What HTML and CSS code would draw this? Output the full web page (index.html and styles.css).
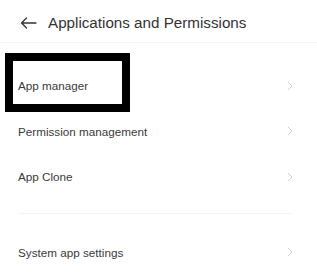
FILE: index.html
```html
<!DOCTYPE html>
<html lang="en">
<head>
    <meta charset="UTF-8">
    <title>Applications and Permissions</title>
    <link rel="stylesheet" href="styles.css">
</head>
<body>
    <div class="header">
        <svg class="back" width="17" height="12" viewBox="0 0 17 12">
            <path d="M16 6H1.5M6.5 1L1.5 6l5 5" fill="none" stroke="#333" stroke-width="1.3" stroke-linecap="round" stroke-linejoin="round"/>
        </svg>
        <span class="title">Applications and Permissions</span>
    </div>
    <div class="list">
        <div class="row">
            <span>App manager</span>
            <svg class="chev" width="6" height="10" viewBox="0 0 6 10"><path d="M1 1l4 4-4 4" fill="none" stroke="#cfcfcf" stroke-width="1"/></svg>
        </div>
        <div class="row">
            <span>Permission management</span>
            <svg class="chev" width="6" height="10" viewBox="0 0 6 10"><path d="M1 1l4 4-4 4" fill="none" stroke="#cfcfcf" stroke-width="1"/></svg>
        </div>
        <div class="row">
            <span>App Clone</span>
            <svg class="chev" width="6" height="10" viewBox="0 0 6 10"><path d="M1 1l4 4-4 4" fill="none" stroke="#cfcfcf" stroke-width="1"/></svg>
        </div>
        <div class="divider"></div>
        <div class="row">
            <span>System app settings</span>
            <svg class="chev" width="6" height="10" viewBox="0 0 6 10"><path d="M1 1l4 4-4 4" fill="none" stroke="#cfcfcf" stroke-width="1"/></svg>
        </div>
    </div>
    <div class="highlight"></div>
</body>
</html>
```
FILE: styles.css
```css
body {
    margin: 0;
    background: #fff;
    font-family: 'Liberation Sans', Arial, sans-serif;
    color: #333;
    position: relative;
    width: 317px;
    height: 279px;
    overflow: hidden;
}
.header {
    height: 43px;
    display: flex;
    align-items: center;
    padding-left: 20px;
    border-bottom: 1px solid #f4f4f4;
    box-sizing: border-box;
}
.back {
    margin-right: 11px;
    margin-top: 3px;
}
.title {
    font-size: 15.2px;
    color: #333;
    margin-top: 3px;
}
.list {
    padding: 20px 24px 0 18px;
}
.row {
    height: 45.5px;
    display: flex;
    align-items: center;
    justify-content: space-between;
    font-size: 11.7px;
    color: #3a3a3a;
}
.divider {
    height: 1px;
    background: #f3f3f3;
    margin: 13px 0 16px;
}
/* annotation box */
.highlight {
    position: absolute;
    left: 5px;
    top: 53px;
    width: 109px;
    height: 43px;
    border: 8px solid #000;
}
```
